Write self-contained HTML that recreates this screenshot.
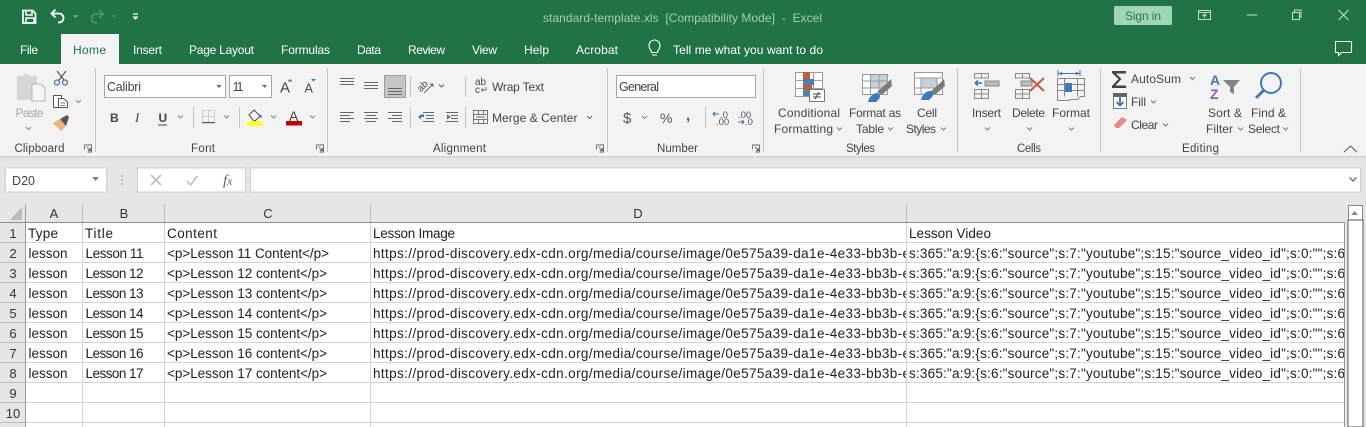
<!DOCTYPE html>
<html><head><meta charset="utf-8"><title>standard-template.xls</title>
<style>
html,body{margin:0;padding:0;background:#e6e6e6;overflow:hidden}
svg{display:block}
text{font-family:"Liberation Sans",sans-serif;white-space:pre}
.r{font-size:12px;fill:#444}
.tab{font-size:12px;fill:#fff}
.g{font-size:11.5px;fill:#444}
.c{font-size:13.5px;fill:#222}
.h{font-size:13px;fill:#333}
</style></head><body>
<svg width="1366" height="427" viewBox="0 0 1366 427" xmlns="http://www.w3.org/2000/svg">
<defs>
<clipPath id="cd"><rect x="371" y="222" width="535" height="200"/></clipPath>
<clipPath id="ce"><rect x="907" y="222" width="437" height="200"/></clipPath>
</defs>
<rect width="1366" height="427" fill="#e6e6e6"/>
<rect width="1366" height="64" fill="#217346"/>
<rect y="64" width="1366" height="93" fill="#f3f3f3"/>
<rect y="156" width="1366" height="1.5" fill="#d2d2d2"/>
<rect x="61" y="34" width="58" height="30" fill="#f3f3f3"/>

<!-- QAT -->
<g fill="none" stroke="#fff" stroke-width="1.7">
<path d="M23 10.5h9.5l3 3v9.5h-12.500z"/><path d="M26 11v4h6v-4M26 23v-5h8v5" stroke-width="1.500"/>
<path d="M52 13.500h7a4.500 4.500 0 0 1 0 9h-1M55.500 9.500l-4 4 4 4" stroke-width="1.800"/>
<path d="M73.500 15l2 2 2-2" stroke="#a6c9b4" stroke-width="1"/>
<path d="M103 14h-7a4.500 4.500 0 0 0 0 9h1M99 10l4 4-4 4" stroke="#4f9270" stroke-width="1.800"/>
<path d="M112 15l2 2 2-2" stroke="#4f9270" stroke-width="1"/>
<path d="M133 14h5" stroke-width="1.200"/>
</g>
<path d="M132.500 16.500h6l-3 3.500z" fill="#fff"/>
<text x="543" y="22" font-size="12" fill="#a5ccb6" textLength="279" lengthAdjust="spacing">standard-template.xls  [Compatibility Mode]  -  Excel</text>
<rect x="1114" y="6" width="58" height="19" rx="1.500" fill="#a0d5b5"/>
<text x="1125" y="20" font-size="12" fill="#2f7450" textLength="36" lengthAdjust="spacing">Sign in</text>
<g fill="none" stroke="#c5dccf" stroke-width="1">
<path d="M1198.500 10.500h12v9h-12zM1198.500 12.500h12M1204.500 18v-4M1202.500 16l2-2 2 2"/>
<path d="M1247 15h10"/>
<path d="M1292.500 12.500h7v7h-7zM1294.500 12v-2h6.500v7h-1.500"/>
<path d="M1338.500 10l10 10M1348.500 10l-10 10" stroke-width="1.100"/>
</g>
<!-- tabs -->
<text class="tab" x="20" y="54" textLength="18" lengthAdjust="spacing">File</text>
<text x="73" y="54" font-size="12" fill="#217346" textLength="33" lengthAdjust="spacing">Home</text>
<text class="tab" x="133" y="54" textLength="29" lengthAdjust="spacing">Insert</text>
<text class="tab" x="189" y="54" textLength="65" lengthAdjust="spacing">Page Layout</text>
<text class="tab" x="281" y="54" textLength="49" lengthAdjust="spacing">Formulas</text>
<text class="tab" x="357" y="54" textLength="24" lengthAdjust="spacing">Data</text>
<text class="tab" x="408" y="54" textLength="37" lengthAdjust="spacing">Review</text>
<text class="tab" x="472" y="54" textLength="25" lengthAdjust="spacing">View</text>
<text class="tab" x="524" y="54" textLength="25" lengthAdjust="spacing">Help</text>
<text class="tab" x="576" y="54" textLength="42" lengthAdjust="spacing">Acrobat</text>
<text class="tab" x="673" y="54" textLength="150" lengthAdjust="spacing">Tell me what you want to do</text>
<path d="M651.500 52.500c0-2.500-2.500-3-2.500-7a5.500 5.500 0 0 1 11 0c0 4-2.500 4.500-2.500 7zM652 55h5" fill="none" stroke="#fff" stroke-width="1.100"/>
<path d="M1335.500 41.500h16v11h-10l-3 3v-3h-3z" fill="none" stroke="#fff" stroke-width="1.100"/>

<!-- separators -->
<g fill="#c6c6c6">
<rect x="95" y="68" width="1" height="84"/><rect x="327" y="68" width="1" height="84"/><rect x="607" y="68" width="1" height="84"/><rect x="763" y="68" width="1" height="84"/><rect x="957" y="68" width="1" height="84"/><rect x="1100" y="68" width="1" height="84"/><rect x="1300" y="68" width="1" height="84"/>
<rect x="193" y="107" width="1" height="21"/><rect x="239" y="107" width="1" height="21"/><rect x="410" y="76" width="1" height="21"/><rect x="410" y="107" width="1" height="21"/><rect x="465" y="76" width="1" height="21"/><rect x="465" y="107" width="1" height="21"/><rect x="705" y="107" width="1" height="21"/>
</g>

<!-- Clipboard -->
<path d="M17 76h7v-2h5v2h7a1 1 0 0 1 1 1v23H17z" fill="#d6d6d6"/>
<path d="M32 84h9l4 4v13H32z" fill="#f6f6f6" stroke="#b5b5b5"/>
<text x="15.500" y="117" font-size="12" fill="#a9a9a9" textLength="28" lengthAdjust="spacing">Paste</text>
<path d="M26 127l2.500 2.500 2.500-2.500M76 100l2.500 2.500 2.500-2.500" fill="none" stroke="#888" stroke-width="1"/>
<g fill="none" stroke="#555" stroke-width="1.200"><path d="M57 71l7 9M66 71l-7 9"/><circle cx="57" cy="82.500" r="2.500" stroke="#3f72a8"/><circle cx="65" cy="82.500" r="2.500" stroke="#3f72a8"/></g>
<g fill="#fff" stroke="#555" stroke-width="1"><path d="M53.500 95.500h8v12h-8z"/><path d="M58.500 98.500h5l4 3.500v5.500h-9z"/><path d="M60.500 103h5M60.500 105.500h5" stroke-width=".8"/></g>
<path d="M53 123l7-4 6 7-5 5z" fill="#eab679"/><path d="M60 119l7-4 2 2-3 9z" fill="#555"/>
<text class="g" x="14.500" y="152" textLength="50" lengthAdjust="spacing">Clipboard</text>

<!-- launcher icons -->
<g fill="none" stroke="#666" stroke-width=".9">
<path d="M84.500 149.500v-4.500h7v7h-4M87 147l3.500 3.500M88 150.500h2.500v-2.500"/>
<path d="M316.500 149.500v-4.500h7v7h-4M319 147l3.500 3.500M320 150.500h2.500v-2.500"/>
<path d="M596.500 149.500v-4.500h7v7h-4M599 147l3.500 3.500M600 150.500h2.500v-2.500"/>
<path d="M752.500 149.500v-4.500h7v7h-4M755 147l3.500 3.500M756 150.500h2.500v-2.500"/>
</g>

<!-- Font -->
<rect x="104.500" y="75.500" width="121" height="22" fill="#fff" stroke="#a6a6a6"/>
<rect x="229.500" y="75.500" width="42" height="22" fill="#fff" stroke="#a6a6a6"/>
<text x="107" y="91" font-size="12.500" fill="#444" textLength="34" lengthAdjust="spacing">Calibri</text>
<text x="232.500" y="91" font-size="12.500" fill="#444" textLength="11" lengthAdjust="spacing">11</text>
<path d="M216.500 85h5l-2.500 3zM262 85h5l-2.500 3zM745 85h5l-2.500 3z" fill="#666"/>
<text x="280" y="92.500" font-size="15" fill="#444">A</text>
<text x="304.500" y="92.500" font-size="12.500" fill="#444">A</text>
<path d="M287.500 81.500l2.500-2.500 2.500 2.500z" fill="#3f72a8"/><path d="M311 79h5l-2.500 2.500z" fill="#3f72a8"/>
<text x="110" y="122" font-size="12" font-weight="bold" fill="#444">B</text>
<text x="135" y="122" font-size="13" font-style="italic" fill="#444" style="font-family:'Liberation Serif',serif">I</text>
<text x="158.500" y="122" font-size="12" font-weight="bold" fill="#444">U</text>
<rect x="158" y="124.500" width="9" height="1" fill="#444"/>
<g fill="none" stroke="#888" stroke-width="1">
<path d="M178 115.500l2.500 2.500 2.500-2.500M224 115.500l2.500 2.500 2.500-2.500M271 115.500l2.500 2.500 2.500-2.500M310 115.500l2.500 2.500 2.500-2.500"/>
<path d="M202.500 110.500h12v12h-12zM208.500 110.500v12M202.500 116.500h12" stroke-dasharray="1 1" stroke="#aaa"/>
</g>
<rect x="202" y="122" width="13" height="1.200" fill="#555"/>
<path d="M249 115l5-5 6 6-4.500 4.500h-2z" fill="#f5f5f5" stroke="#555"/><path d="M259 114l3 2-1 3z" fill="#3f72a8"/>
<rect x="247" y="121" width="16" height="5" fill="#ffff33"/>
<text x="289" y="121" font-size="14" fill="#444">A</text>
<rect x="286" y="121" width="16" height="4.500" fill="#c00000"/>
<text class="g" x="191" y="152" textLength="24" lengthAdjust="spacing">Font</text>

<!-- Alignment -->
<rect x="384.500" y="75.500" width="21" height="22" fill="#c6c6c6" stroke="#9c9c9c"/>
<g fill="none" stroke="#666" stroke-width="1">
<path d="M340 78.500h14M340 81.500h14M340 84.500h14M364 82.500h14M364 85.500h14M364 88.500h14M388 88.500h14M388 91.500h14M388 94.500h14" />
<path d="M340 112.500h14M340 115.500h10M340 118.500h14M340 121.500h10M364 112.500h14M366 115.500h10M364 118.500h14M366 121.500h10M388 112.500h14M392 115.500h10M388 118.500h14M392 121.500h10"/>
<path d="M423 112.500h11M426 115.500h8M426 118.500h8M423 121.500h11M446 112.500h12M451 115.500h7M451 118.500h7M446 121.500h12"/>
<path d="M439 84.500l2.500 2.500 2.500-2.500M587 116l2.500 2.500 2.500-2.500"/>
<path d="M424 93l9-9M433 84h-3M433 84v3"/>
</g>
<text x="417" y="89" font-size="10" fill="#444" transform="rotate(-45 423 86)">ab</text>
<path d="M418 117h6v-2.500l-3 0-3 2.500 3 2.500 0-2.500zM447 114.500l4 2.500-4 2.500z" fill="#3f72a8"/>
<text x="475" y="85" font-size="10" fill="#444">ab</text>
<text x="475" y="93" font-size="10" fill="#444">c</text>
<path d="M486 87v3h-4M483 88.500l-1.500 1.500 1.500 1.500" fill="none" stroke="#3f72a8" stroke-width=".9"/>
<text x="492" y="91" class="r" textLength="52" lengthAdjust="spacing">Wrap Text</text>
<text x="492" y="122" class="r" textLength="85.500" lengthAdjust="spacing">Merge &amp; Center</text>
<g fill="none" stroke="#777"><path d="M473.500 110.500h14v13h-14zM473.500 114.500h14M473.500 119.500h14M478.500 110.500v4M483.500 110.500v4M478.500 119.500v4M483.500 119.500v4"/><path d="M476 117h9" stroke="#3f72a8"/></g>
<text class="g" x="433" y="152" textLength="53" lengthAdjust="spacing">Alignment</text>

<!-- Number -->
<rect x="616.500" y="75.500" width="139" height="22" fill="#fff" stroke="#a6a6a6"/>
<text x="619" y="91" font-size="12.500" fill="#444" textLength="40" lengthAdjust="spacing">General</text>
<text x="623" y="123" font-size="15" fill="#555" textLength="9" lengthAdjust="spacing">$</text>
<text x="660" y="123" font-size="14" fill="#555" textLength="13" lengthAdjust="spacing">%</text>
<text x="686" y="120" font-size="15" font-weight="bold" fill="#555">,</text>
<path d="M642 116l2.500 2.500 2.500-2.500" fill="none" stroke="#888"/>
<text x="720" y="118" font-size="9.500" fill="#555">.0</text><text x="716" y="125" font-size="9.500" fill="#555">.00</text>
<text x="738" y="118" font-size="9.500" fill="#555">.00</text><text x="745" y="125" font-size="9.500" fill="#555">.0</text>
<path d="M713 114h6M713 114l2-2M713 114l2 2M738 122h6M744 122l-2-2M744 122l-2 2" stroke="#3f72a8" stroke-width="1.100" fill="none"/>
<text class="g" x="657" y="152" textLength="41" lengthAdjust="spacing">Number</text>

<!-- Styles -->
<g>
<rect x="795.500" y="72.500" width="27" height="24" fill="#fff" stroke="#9a9a9a"/>
<path d="M795.500 80.500h27M795.500 88.500h27M804.500 72.500v24M813.500 72.500v24" stroke="#a0a0a0" fill="none"/>
<rect x="803" y="72" width="7" height="8" fill="#c65b3c"/><rect x="803" y="79" width="11" height="6" fill="#4a7fb8"/><rect x="803" y="85" width="9" height="5" fill="#c65b3c"/><rect x="803" y="90" width="6" height="6" fill="#4a7fb8"/>
<rect x="809.500" y="89.500" width="15" height="12" fill="#fff" stroke="#777"/>
<path d="M813 94h8M813 97h8M819 92l-4 7" stroke="#444" fill="none"/>
<rect x="862.500" y="74.500" width="25" height="20" fill="#fff" stroke="#999"/>
<rect x="870" y="75" width="17" height="13" fill="#c6d0da"/>
<path d="M862.500 81h25M862.500 88h25M870.500 74.500v20M879 74.500v20" stroke="#999" fill="none"/>
<path d="M877 92l9-8 5-5 1 7-9 8h-3z" fill="#7b7b7b"/><path d="M868 102c1-5 5-9 9-9 3 1 4 3 2 6l-3 3z" fill="#3f7ab8"/>
<rect x="914.500" y="72.500" width="28" height="22" fill="#fff" stroke="#999"/><rect x="921" y="78" width="16" height="10" fill="#c6d0da"/>
<path d="M914.500 78h28M914.500 88h28M921 78v16M937 78v10" stroke="#999" fill="none"/>
<path d="M930 92l9-8 5-5 1 7-9 8h-3z" fill="#7b7b7b"/><path d="M921 100c1-5 5-9 9-9 3 1 4 3 2 6l-3 3z" fill="#3f7ab8"/>
</g>
<text class="r" x="778" y="117" textLength="62" lengthAdjust="spacing">Conditional</text>
<text class="r" x="774" y="133" textLength="59" lengthAdjust="spacing">Formatting</text>
<text class="r" x="849" y="117" textLength="52" lengthAdjust="spacing">Format as</text>
<text class="r" x="856" y="133" textLength="28" lengthAdjust="spacing">Table</text>
<text class="r" x="917" y="117" textLength="20" lengthAdjust="spacing">Cell</text>
<text class="r" x="906" y="133" textLength="30" lengthAdjust="spacing">Styles</text>
<text class="g" x="846" y="152" textLength="29" lengthAdjust="spacing">Styles</text>
<path d="M837 127.500l2.500 2.500 2.500-2.500M888 127.500l2.500 2.500 2.500-2.500M941 127.500l2.500 2.500 2.500-2.500" fill="none" stroke="#777"/>

<!-- Cells -->
<g fill="none" stroke="#888" stroke-width="1">
<path d="M974.500 73.500h14v4.500h-14zM981.500 73.500v4.500M974.500 89.500h14v9h-14zM974.500 94h14M981.500 89.500v9"/>
<path d="M1015.500 73.500h14v4.500h-14zM1022.500 73.500v4.500M1015.500 89.500h14v9h-14zM1015.500 94h14M1022.500 89.500v9"/>
<path d="M1057.500 78.500h27v18h-4l-3 3h-7l-2 1h-11zM1057.500 84.500h27M1057.500 90.500h27M1064.500 78.500v18M1077.500 78.500v18"/>
</g>
<rect x="985" y="81" width="14" height="5" fill="#bbb" stroke="#888"/>
<path d="M975 83h7M975 83l3-2.500M975 83l3 2.500" stroke="#3f72a8" stroke-width="1.500" fill="none"/>
<rect x="1021" y="81" width="11" height="5" fill="#bbb" stroke="#888"/>
<path d="M1030 78l14 13M1044 78l-14 13" stroke="#c9583f" stroke-width="2" fill="none"/>
<rect x="1065" y="83" width="7" height="9" fill="#3f7ab8"/>
<path d="M1058 73.500h22M1058 70v6M1080 70v6M1060 73.500l2-1.500M1060 73.500l2 1.500M1078 73.500l-2-1.500M1078 73.500l-2 1.500" stroke="#3f72a8" fill="none"/>
<text class="r" x="972" y="117" textLength="29" lengthAdjust="spacing">Insert</text>
<text class="r" x="1012" y="117" textLength="33" lengthAdjust="spacing">Delete</text>
<text class="r" x="1052" y="117" textLength="38" lengthAdjust="spacing">Format</text>
<path d="M985 127.500l2.500 2.500 2.500-2.500M1027 127.500l2.500 2.500 2.500-2.500M1069 127.500l2.500 2.500 2.500-2.500" fill="none" stroke="#777"/>
<text class="g" x="1017" y="152" textLength="24" lengthAdjust="spacing">Cells</text>

<!-- Editing -->
<path d="M1112 71h14v2.500h-10l5.500 5.500-6 6.500h10.500v2.500h-14v-2l6.500-7-6.500-6z" fill="#444"/>
<text class="r" x="1131" y="83" textLength="50" lengthAdjust="spacing">AutoSum</text>
<path d="M1190 77l2.500 2.500 2.500-2.500M1151 100.500l2.500 2.500 2.500-2.500M1163 123.500l2.500 2.500 2.500-2.500M1238 127.500l2.500 2.500 2.500-2.500M1283 127.500l2.500 2.500 2.500-2.500" fill="none" stroke="#777"/>
<rect x="1113.500" y="94.500" width="13" height="14" fill="#fff" stroke="#777"/><rect x="1113" y="93" width="14" height="4" fill="#666"/>
<path d="M1120 97v8M1116.500 102l3.500 3.500 3.500-3.500" stroke="#3f72a8" stroke-width="1.800" fill="none"/>
<text class="r" x="1131" y="106" textLength="15" lengthAdjust="spacing">Fill</text>
<path d="M1114 125l8-8 5 3-8 8h-3z" fill="#e9858b"/>
<text class="r" x="1131" y="129" textLength="27" lengthAdjust="spacing">Clear</text>
<text x="1210" y="85" font-size="14" font-weight="bold" fill="#3f7ab8">A</text>
<text x="1210" y="99" font-size="14" font-weight="bold" fill="#8a5ea8">Z</text>
<path d="M1223 80h17l-6 7v7l-4-2v-5z" fill="#858585"/>
<circle cx="1271" cy="83" r="10" fill="none" stroke="#3f7ab8" stroke-width="2"/>
<path d="M1264 90l-8 8" stroke="#3f7ab8" stroke-width="3"/>
<text class="r" x="1208" y="117" textLength="34" lengthAdjust="spacing">Sort &amp;</text>
<text class="r" x="1206" y="133" textLength="27" lengthAdjust="spacing">Filter</text>
<text class="r" x="1251" y="117" textLength="35" lengthAdjust="spacing">Find &amp;</text>
<text class="r" x="1248" y="133" textLength="32" lengthAdjust="spacing">Select</text>
<text class="g" x="1182" y="152" textLength="37" lengthAdjust="spacing">Editing</text>
<path d="M1344 152l6.500-6 6.500 6" fill="none" stroke="#555" stroke-width="1"/>

<!-- formula bar -->
<rect x="5.500" y="168" width="101" height="24" fill="#fff" stroke="#cfcfcf"/>
<text x="12" y="185" font-size="12.500" fill="#444" textLength="23" lengthAdjust="spacing">D20</text>
<path d="M92 177h7l-3.500 4z" fill="#808080"/>
<path d="M122 175v2M122 179v2M122 183v2" stroke="#aaa" stroke-width="1.500"/>
<rect x="137.500" y="168" width="108" height="24" fill="#fff" stroke="#cfcfcf"/>
<path d="M151 175l10 10M161 175l-10 10M187 181l3.500 4 7-9" stroke="#bdbdbd" stroke-width="1.600" fill="none"/>
<text x="223" y="185" font-size="15" font-style="italic" fill="#666" style="font-family:'Liberation Serif',serif">f<tspan font-size="12">x</tspan></text>
<rect x="250.500" y="168" width="1110" height="24" fill="#fff" stroke="#cfcfcf"/>
<path d="M1349.500 177.500l3.500 3.500 3.500-3.500" fill="none" stroke="#777" stroke-width="1.500"/>

<!-- sheet -->
<rect x="26" y="222" width="1318" height="205" fill="#fff"/>
<path d="M22 207v13H10z" fill="#bcbcbc"/>
<g fill="#bbb">
<rect x="82" y="204" width="1" height="18"/><rect x="164" y="204" width="1" height="18"/><rect x="370" y="204" width="1" height="18"/><rect x="906" y="204" width="1" height="18"/>
<rect x="0" y="242" width="25" height="1"/><rect x="0" y="262" width="25" height="1"/><rect x="0" y="282" width="25" height="1"/><rect x="0" y="302" width="25" height="1"/><rect x="0" y="322" width="25" height="1"/><rect x="0" y="342" width="25" height="1"/><rect x="0" y="362" width="25" height="1"/><rect x="0" y="382" width="25" height="1"/><rect x="0" y="402" width="25" height="1"/><rect x="0" y="422" width="25" height="1"/>
</g>
<g fill="#d4d4d4">
<rect x="26" y="242" width="1318" height="1"/><rect x="26" y="262" width="1318" height="1"/><rect x="26" y="282" width="1318" height="1"/><rect x="26" y="302" width="1318" height="1"/><rect x="26" y="322" width="1318" height="1"/><rect x="26" y="342" width="1318" height="1"/><rect x="26" y="362" width="1318" height="1"/><rect x="26" y="382" width="1318" height="1"/><rect x="26" y="402" width="1318" height="1"/><rect x="26" y="422" width="1318" height="1"/>
<rect x="82" y="222" width="1" height="205"/><rect x="164" y="222" width="1" height="205"/><rect x="370" y="222" width="1" height="205"/><rect x="906" y="222" width="1" height="205"/>
</g>
<rect x="0" y="222" width="1345" height="1" fill="#8f8f8f"/>
<rect x="25" y="204" width="1" height="223" fill="#9a9a9a"/>
<rect x="1344" y="222" width="1" height="205" fill="#9a9a9a"/>
<!-- scrollbar -->
<rect x="1348.500" y="205.500" width="14" height="15" fill="#fff" stroke="#8a8a8a"/>
<path d="M1351 215h7l-3.500-4z" fill="#8a8a8a"/>
<rect x="1348" y="220" width="15" height="207" fill="#fff" stroke="#555" stroke-width="1"/>

<g text-anchor="middle" class="h">
<text class="h" x="54" y="218">A</text><text class="h" x="124" y="218">B</text><text class="h" x="268" y="218">C</text><text class="h" x="638" y="218">D</text>
<text class="h" x="13" y="238">1</text><text class="h" x="13" y="258">2</text><text class="h" x="13" y="278">3</text><text class="h" x="13" y="298">4</text><text class="h" x="13" y="318">5</text><text class="h" x="13" y="338">6</text><text class="h" x="13" y="358">7</text><text class="h" x="13" y="378">8</text><text class="h" x="13" y="398">9</text><text class="h" x="13" y="418">10</text>
</g>

<text class="c" x="28" y="238" textLength="30" lengthAdjust="spacing">Type</text>
<text class="c" x="85" y="238" textLength="28" lengthAdjust="spacing">Title</text>
<text class="c" x="167" y="238" textLength="50" lengthAdjust="spacing">Content</text>
<text class="c" x="373" y="238" textLength="82" lengthAdjust="spacing">Lesson Image</text>
<text class="c" x="909" y="238" textLength="82" lengthAdjust="spacing">Lesson Video</text>

<text class="c" x="28.500" y="258" textLength="39" lengthAdjust="spacing">lesson</text><text class="c" x="85.500" y="258" textLength="58" lengthAdjust="spacing">Lesson 11</text><text class="c" x="167" y="258" textLength="162" lengthAdjust="spacing">&lt;p&gt;Lesson 11 Content&lt;/p&gt;</text>
<text class="c" x="28.500" y="278" textLength="39" lengthAdjust="spacing">lesson</text><text class="c" x="85.500" y="278" textLength="58" lengthAdjust="spacing">Lesson 12</text><text class="c" x="167" y="278" textLength="160" lengthAdjust="spacing">&lt;p&gt;Lesson 12 content&lt;/p&gt;</text>
<text class="c" x="28.500" y="298" textLength="39" lengthAdjust="spacing">lesson</text><text class="c" x="85.500" y="298" textLength="58" lengthAdjust="spacing">Lesson 13</text><text class="c" x="167" y="298" textLength="160" lengthAdjust="spacing">&lt;p&gt;Lesson 13 content&lt;/p&gt;</text>
<text class="c" x="28.500" y="318" textLength="39" lengthAdjust="spacing">lesson</text><text class="c" x="85.500" y="318" textLength="58" lengthAdjust="spacing">Lesson 14</text><text class="c" x="167" y="318" textLength="160" lengthAdjust="spacing">&lt;p&gt;Lesson 14 content&lt;/p&gt;</text>
<text class="c" x="28.500" y="338" textLength="39" lengthAdjust="spacing">lesson</text><text class="c" x="85.500" y="338" textLength="58" lengthAdjust="spacing">Lesson 15</text><text class="c" x="167" y="338" textLength="160" lengthAdjust="spacing">&lt;p&gt;Lesson 15 content&lt;/p&gt;</text>
<text class="c" x="28.500" y="358" textLength="39" lengthAdjust="spacing">lesson</text><text class="c" x="85.500" y="358" textLength="58" lengthAdjust="spacing">Lesson 16</text><text class="c" x="167" y="358" textLength="160" lengthAdjust="spacing">&lt;p&gt;Lesson 16 content&lt;/p&gt;</text>
<text class="c" x="28.500" y="378" textLength="39" lengthAdjust="spacing">lesson</text><text class="c" x="85.500" y="378" textLength="58" lengthAdjust="spacing">Lesson 17</text><text class="c" x="167" y="378" textLength="160" lengthAdjust="spacing">&lt;p&gt;Lesson 17 content&lt;/p&gt;</text>

<g clip-path="url(#cd)">
<text class="c" x="373" y="258" textLength="537" lengthAdjust="spacing">https://prod-discovery.edx-cdn.org/media/course/image/0e575a39-da1e-4e33-bb3b-e</text>
<text class="c" x="373" y="278" textLength="537" lengthAdjust="spacing">https://prod-discovery.edx-cdn.org/media/course/image/0e575a39-da1e-4e33-bb3b-e</text>
<text class="c" x="373" y="298" textLength="537" lengthAdjust="spacing">https://prod-discovery.edx-cdn.org/media/course/image/0e575a39-da1e-4e33-bb3b-e</text>
<text class="c" x="373" y="318" textLength="537" lengthAdjust="spacing">https://prod-discovery.edx-cdn.org/media/course/image/0e575a39-da1e-4e33-bb3b-e</text>
<text class="c" x="373" y="338" textLength="537" lengthAdjust="spacing">https://prod-discovery.edx-cdn.org/media/course/image/0e575a39-da1e-4e33-bb3b-e</text>
<text class="c" x="373" y="358" textLength="537" lengthAdjust="spacing">https://prod-discovery.edx-cdn.org/media/course/image/0e575a39-da1e-4e33-bb3b-e</text>
<text class="c" x="373" y="378" textLength="537" lengthAdjust="spacing">https://prod-discovery.edx-cdn.org/media/course/image/0e575a39-da1e-4e33-bb3b-e</text>
</g>
<g clip-path="url(#ce)">
<text class="c" x="909" y="258" textLength="436" lengthAdjust="spacing">s:365:"a:9:{s:6:"source";s:7:"youtube";s:15:"source_video_id";s:0:"";s:6</text>
<text class="c" x="909" y="278" textLength="436" lengthAdjust="spacing">s:365:"a:9:{s:6:"source";s:7:"youtube";s:15:"source_video_id";s:0:"";s:6</text>
<text class="c" x="909" y="298" textLength="436" lengthAdjust="spacing">s:365:"a:9:{s:6:"source";s:7:"youtube";s:15:"source_video_id";s:0:"";s:6</text>
<text class="c" x="909" y="318" textLength="436" lengthAdjust="spacing">s:365:"a:9:{s:6:"source";s:7:"youtube";s:15:"source_video_id";s:0:"";s:6</text>
<text class="c" x="909" y="338" textLength="436" lengthAdjust="spacing">s:365:"a:9:{s:6:"source";s:7:"youtube";s:15:"source_video_id";s:0:"";s:6</text>
<text class="c" x="909" y="358" textLength="436" lengthAdjust="spacing">s:365:"a:9:{s:6:"source";s:7:"youtube";s:15:"source_video_id";s:0:"";s:6</text>
<text class="c" x="909" y="378" textLength="436" lengthAdjust="spacing">s:365:"a:9:{s:6:"source";s:7:"youtube";s:15:"source_video_id";s:0:"";s:6</text>
</g>
</svg>
</body></html>
